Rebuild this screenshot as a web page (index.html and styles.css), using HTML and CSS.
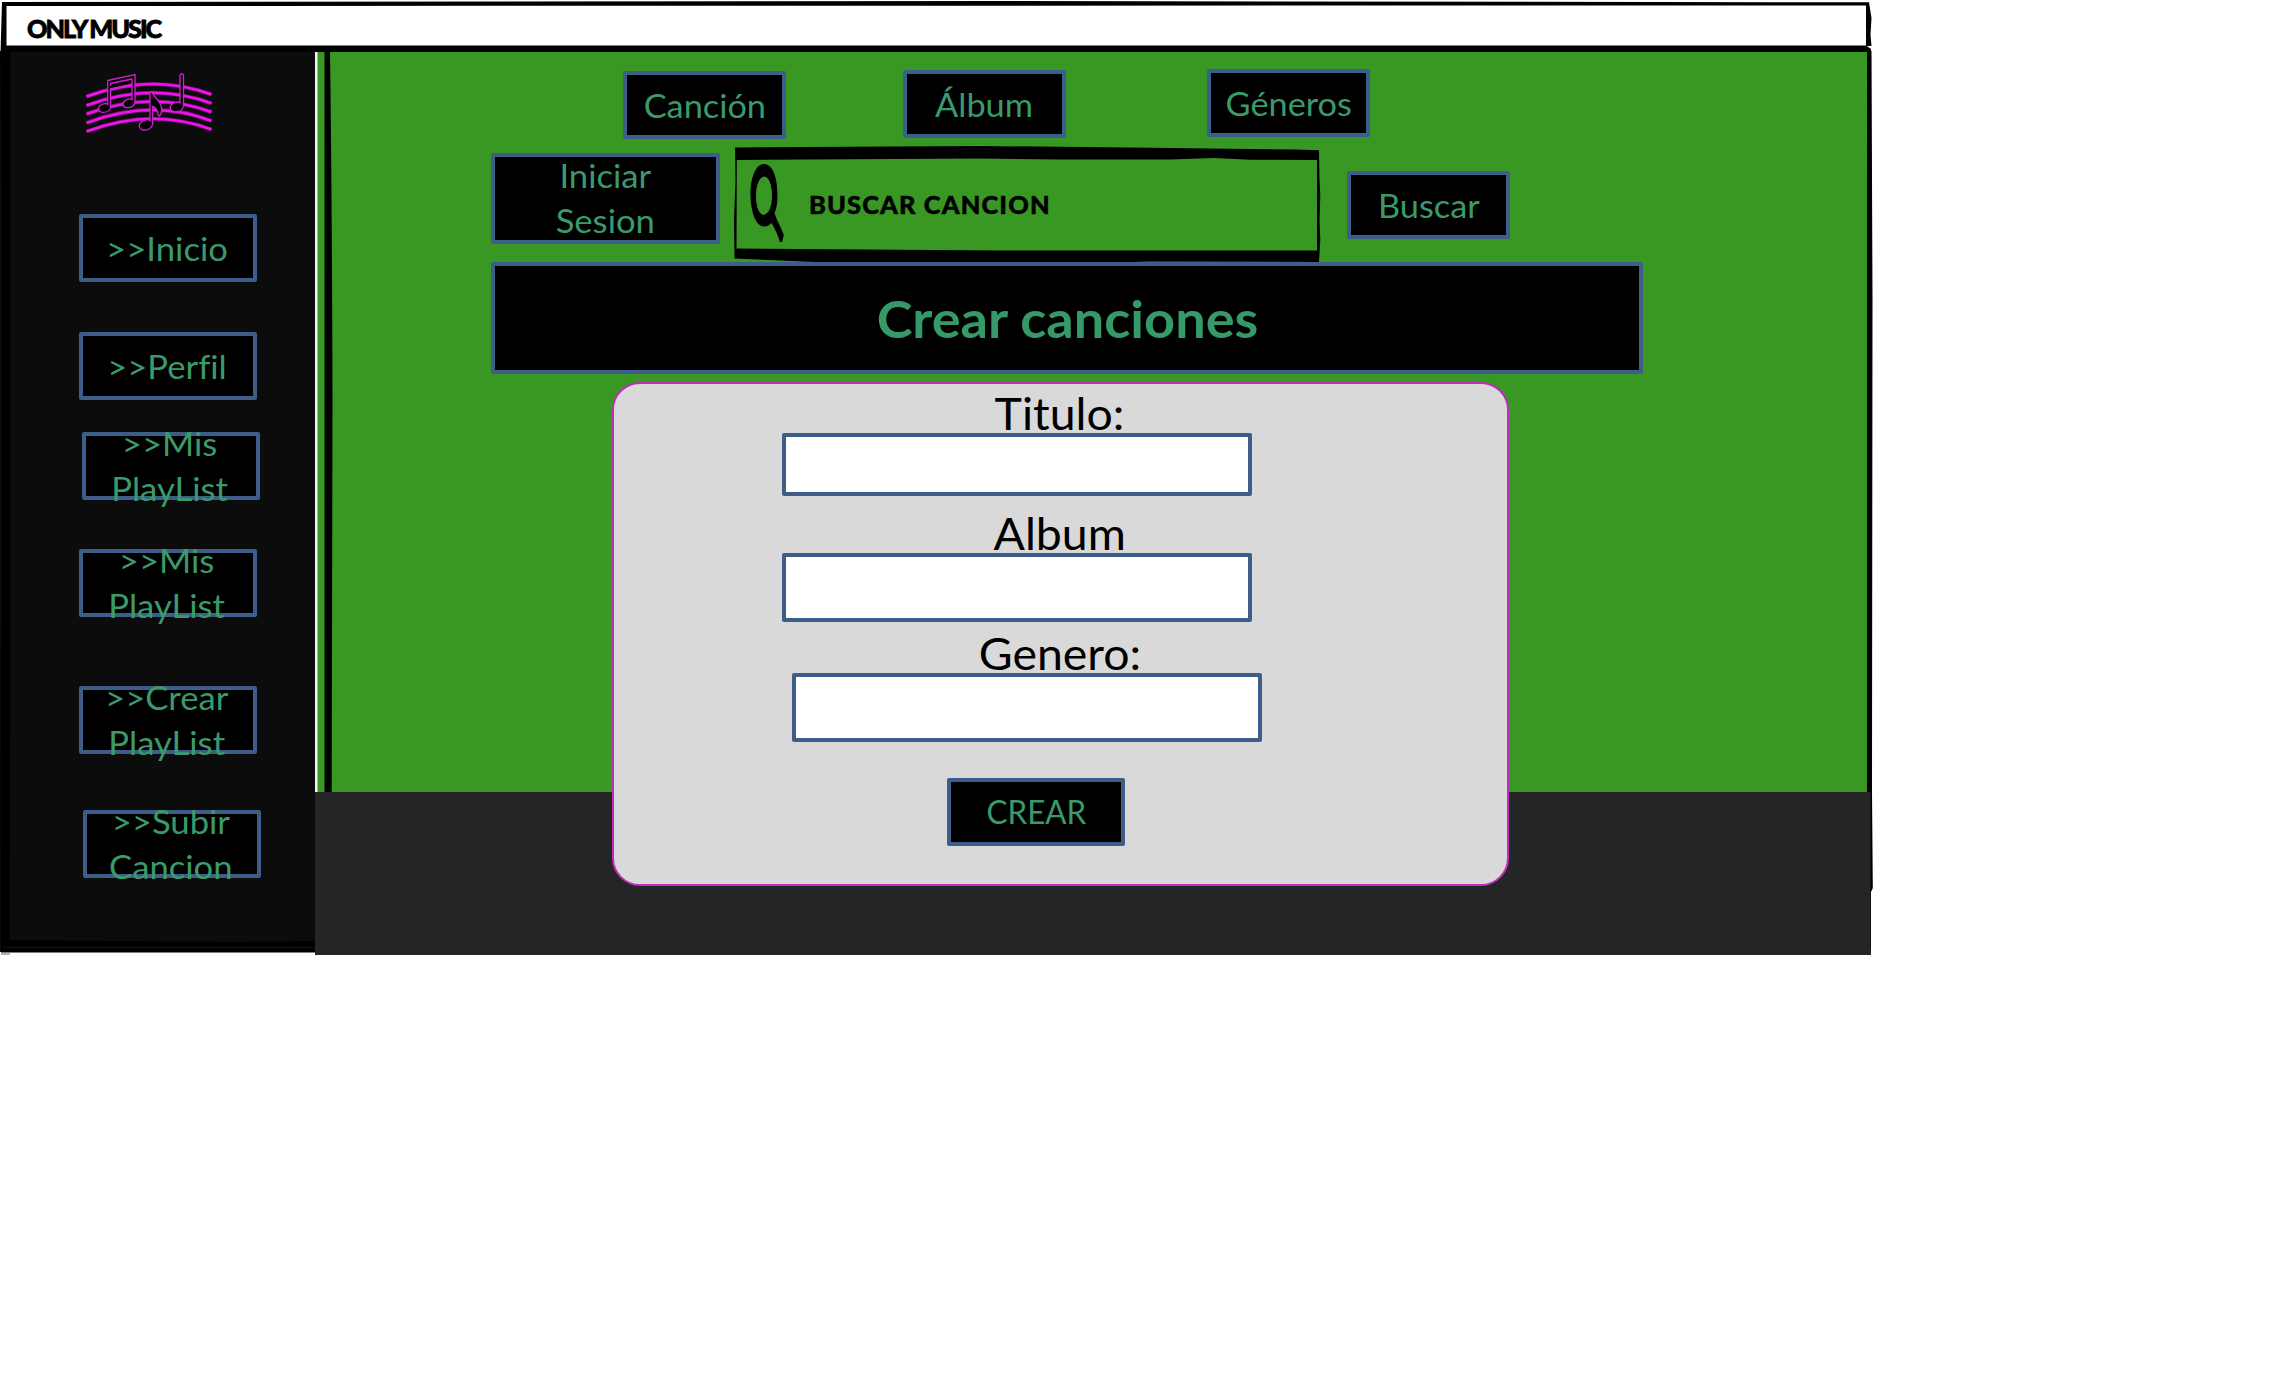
FILE: index.html
```html
<!DOCTYPE html>
<html lang="es">
<head>
<meta charset="utf-8">
<title>Only Music</title>
<link rel="stylesheet" href="styles.css">
</head>
<body>
<div class="app">
  <header class="titlebar"><span class="brand">ONLY MUSIC</span></header>
  <div class="body">
    <aside class="sidebar">
      <svg class="logo" viewBox="70 60 160 85" width="160" height="85">
        <g class="glow"><path d="M86.500 96.500Q152 72.500 211.500 94.500M86.500 105.500Q152 81 211.500 103.300M86.500 114Q152 90 211.500 112M86.500 122.800Q152 98 211.500 120.800M86.500 131.500Q152 107 211.500 129.500"/></g>
        <g class="staff"><path d="M86.500 96.500Q152 72.500 211.500 94.500M86.500 105.500Q152 81 211.500 103.300M86.500 114Q152 90 211.500 112M86.500 122.800Q152 98 211.500 120.800M86.500 131.500Q152 107 211.500 129.500"/></g>
        <g class="notes">
          <path d="M107.700 80.500L135 74.500V102C134.500 106 131 107.800 127 107.700C122 107 122 102 126 100.200C128.500 98.800 131 98.800 132 99.500V84L110.600 88.800V107C110 111 106 112.700 102 112.300C97.500 111.300 97.500 107 101 105C103.500 103.600 106.500 103.500 107.700 104.300Z"/>
          <path d="M110.600 83.500L132 79M110.600 86V83M132 84V79"/>
          <path d="M150 92.500Q151.500 91 152.500 93C154 98 161 101 161.500 108C162 111 161 115 159.500 116C157 116 158.500 112 156.500 109.500Q154.500 107 152.700 106.500V124C152 128 148 130.500 143.500 130C138 129 138.500 124 142 121.500C145 119.700 148.500 119.500 150 120.500Z"/>
          <path d="M180 75Q181.700 72.500 183.500 75V106C183 110 179 112 174.500 111.700C169 110.700 169 106 173 103.500C175.500 102 178.500 102 180 102.800Z"/>
        </g>
      </svg>
      <button class="btn side s1"><span>&gt;&gt;Inicio</span></button>
      <button class="btn side s2"><span>&gt;&gt;Perfil</span></button>
      <button class="btn side s3"><span>&gt;&gt;Mis<br>PlayList</span></button>
      <button class="btn side s4"><span>&gt;&gt;Mis<br>PlayList</span></button>
      <button class="btn side s5"><span>&gt;&gt;Crear<br>PlayList</span></button>
      <button class="btn side s6"><span>&gt;&gt;Subir<br>Cancion</span></button>
    </aside>
    <main class="main">
      <nav class="nav">
        <button class="btn tab t1"><span>Canción</span></button>
        <button class="btn tab t2"><span>Álbum</span></button>
        <button class="btn tab t3"><span>Géneros</span></button>
      </nav>
      <div class="searchrow">
        <button class="btn login"><span>Iniciar<br>Sesion</span></button>
        <div class="search">
          <svg class="searchframe" viewBox="734 146 588 118" width="588" height="118">
            <path fill-rule="evenodd" d="M735 147.500L980 146L1130 147.500L1296 149.500L1319 150.300L1319.500 180L1320.300 195L1319.500 220L1320.300 240L1319 262H1319L1150 261.500L1060 264H860L734.500 258.500L734 220L735.500 180ZM736.800 160L980 158.500L1060 159.500L1170 159.500L1214 158L1250 159.800L1317 160V250.500H1000L736.500 248.500Z"/>
            <path fill-rule="evenodd" d="M764 164C773 164 777.500 178 777.500 195C777.500 203 776.500 209 774.500 213C777 221 782 229 783.800 235L782 242H780C778 235 775 229 771.500 223C769 226 766 226.500 763 226.500C755 225 750.500 210 750.500 194C750.500 177 756 164 764 164ZM764.500 176.500C759 177 756 186 756 196C756 206 758.500 214 763.500 215C769 214 772 206 772 196C772 185 769 177 764.500 176.500Z"/>
          </svg>
          <span class="hint">BUSCAR CANCION</span>
        </div>
        <button class="btn tab go"><span>Buscar</span></button>
      </div>
      <h1 class="banner"><span>Crear canciones</span></h1>
      <form class="form">
        <label class="l1"><span>Titulo:</span></label>
        <input class="f1" type="text">
        <label class="l2"><span>Album</span></label>
        <input class="f2" type="text">
        <label class="l3"><span>Genero:</span></label>
        <input class="f3" type="text">
        <button class="btn create" type="button"><span>CREAR</span></button>
      </form>
    </main>
  </div>
  <svg class="frame" viewBox="0 0 1876 960" width="1876" height="960">
    <path d="M2 2L1000 1L1869 2.300L1871.500 18L1870.500 35L1871.500 46L1866 46V5.500H1500L6.500 6V45.500H1866L1871 49V52H10.500V600L9.500 940L230 942L315 941V952.500H1L0.500 800L1.500 500L1 120L0.300 60Z"/>
    <path d="M324.500 51H330Q332 200 332.500 400L331.700 792H324.500Z"/>
    <path d="M1867 51H1871.500L1872.500 300L1872 792L1872.800 888L1871 892L1871 950H1870.500V792H1867Z"/>
    <path class="line" d="M3 947.500H315"/>
    <path class="dash" d="M1 954H10"/>
  </svg>
</div>
</body>
</html>
```
FILE: styles.css
```css
* { box-sizing: border-box; }
body { margin: 0; background: #fff; font-family: Lato, sans-serif; font-variant-ligatures: none; }
.app { position: relative; width: 1871px; height: 955px; display: flex; flex-direction: column; }
.titlebar { height: 51px; flex: none; padding: 12px 0 0 27px; background: #fff; }
.brand { display: inline-block; font-size: 25px; line-height: 32px; font-weight: 900; color: #000; letter-spacing: -2px; white-space: nowrap; -webkit-text-stroke: 0.8px #000; transform: scaleX(1.01); transform-origin: left; }
.body { flex: 1; display: flex; }
.sidebar { width: 315px; height: 901px; flex: none; background: #0c0c0c; display: flex; flex-direction: column; align-items: flex-start; }
.logo { display: block; margin: 9px 0 0 70px; flex: none; }
.glow { fill: none; stroke: #70106f; stroke-width: 4; }
.staff { fill: none; stroke: #f012ec; stroke-width: 2.500; }
.notes { fill: #050005; stroke: #d21fce; stroke-width: 1.300; }

.btn { display: flex; align-items: center; justify-content: center; flex: none; padding: 0; margin: 0; background: #000; border: 4px solid #3c5e88; border-radius: 2px; color: #3b9a6b; font-family: Lato, sans-serif; font-size: 33px; line-height: 45px; text-align: center; white-space: nowrap; font-variant-ligatures: none; }
.btn span { display: block; flex: none; transform: scaleX(1.04); }
.side { width: 178px; height: 68px; margin-left: 79px; }
.side span { transform: translateX(-1px) scaleX(1.05); }
.s1 { margin-top: 69px; }
.s2 { margin-top: 50px; }
.s3 { margin: 32px 0 0 82px; }
.s4 { margin-top: 49px; }
.s5 { margin-top: 69px; }
.s6 { margin: 56px 0 0 83px; }

.main {
  flex: 1;
  height: 904px;
  padding-left: 3px;
  background:
    linear-gradient(#f4f8f2, #f4f8f2) 0 0 / 2.500px 741px no-repeat,
    linear-gradient(#399824 741px, #252525 741px);
  display: flex;
  flex-direction: column;
  align-items: flex-start;
}
.nav { display: flex; align-items: flex-start; height: 71px; margin: 18px 0 0 305px; }
.tab { width: 163px; height: 68px; }
.t1 { margin-top: 2px; }
.t2 { margin: 1px 0 0 117px; }
.t3 { margin-left: 141px; }
.searchrow { display: flex; align-items: flex-start; height: 115px; margin: 7px 0 0 173px; }
.login { width: 229px; height: 91px; margin-top: 6px; }
.login span { transform: translateY(-0.8px) scaleX(1.05); }
.search { position: relative; width: 586px; height: 115px; margin-left: 14px; padding: 41px 0 0 75px; }
.searchframe { position: absolute; left: 0; top: -1px; }
.hint { display: inline-block; font-size: 25px; line-height: 32px; font-weight: 900; color: #000; letter-spacing: 1.100px; white-space: nowrap; -webkit-text-stroke: 0.5px #000; transform: scaleX(1.017); transform-origin: left; }
.go { margin: 24px 0 0 27px; }
.banner { position: relative; width: 1152px; height: 112px; flex: none; margin: 0 0 0 173px; display: flex; align-items: center; justify-content: center; background: #000; border: 4px solid #3c5e88; border-radius: 2px; color: #359968; font-size: 52px; font-weight: 700; line-height: 64px; }
.banner span { display: block; transform: scaleX(1.04); }
.form { width: 897px; height: 504px; flex: none; margin: 8px 0 0 294px; background: #d9d9d9; border: 2px solid #c02cbc; border-radius: 28px; display: flex; flex-direction: column; align-items: flex-start; }
.form label { display: flex; align-items: flex-end; justify-content: center; width: 892px; font-size: 44px; line-height: 44px; color: #000; }
.form label span { display: block; transform: translateY(2px) scaleX(1.055); }
.l1 { height: 49px; }
.l2 { height: 56px; }
.l3 { height: 50px; }
.form input { width: 470px; height: 69px; margin: 0 0 1px 168px; padding: 0 12px; background: #fff; border: 4px solid #3c5e88; border-radius: 2px; font: 33px Lato, sans-serif; }
.form .f1 { height: 63px; }
.form .f3 { margin-left: 178px; }
.create { width: 178px; height: 68px; margin: 35px 0 0 333px; }
.create span { transform: translateY(-0.8px) scaleX(0.95); }

.frame { position: absolute; left: 0; top: 0; pointer-events: none; }
.line { fill: none; stroke: #0e0e0e; stroke-width: 1.500; }
.dash { fill: none; stroke: #666; stroke-width: 1; }
```
